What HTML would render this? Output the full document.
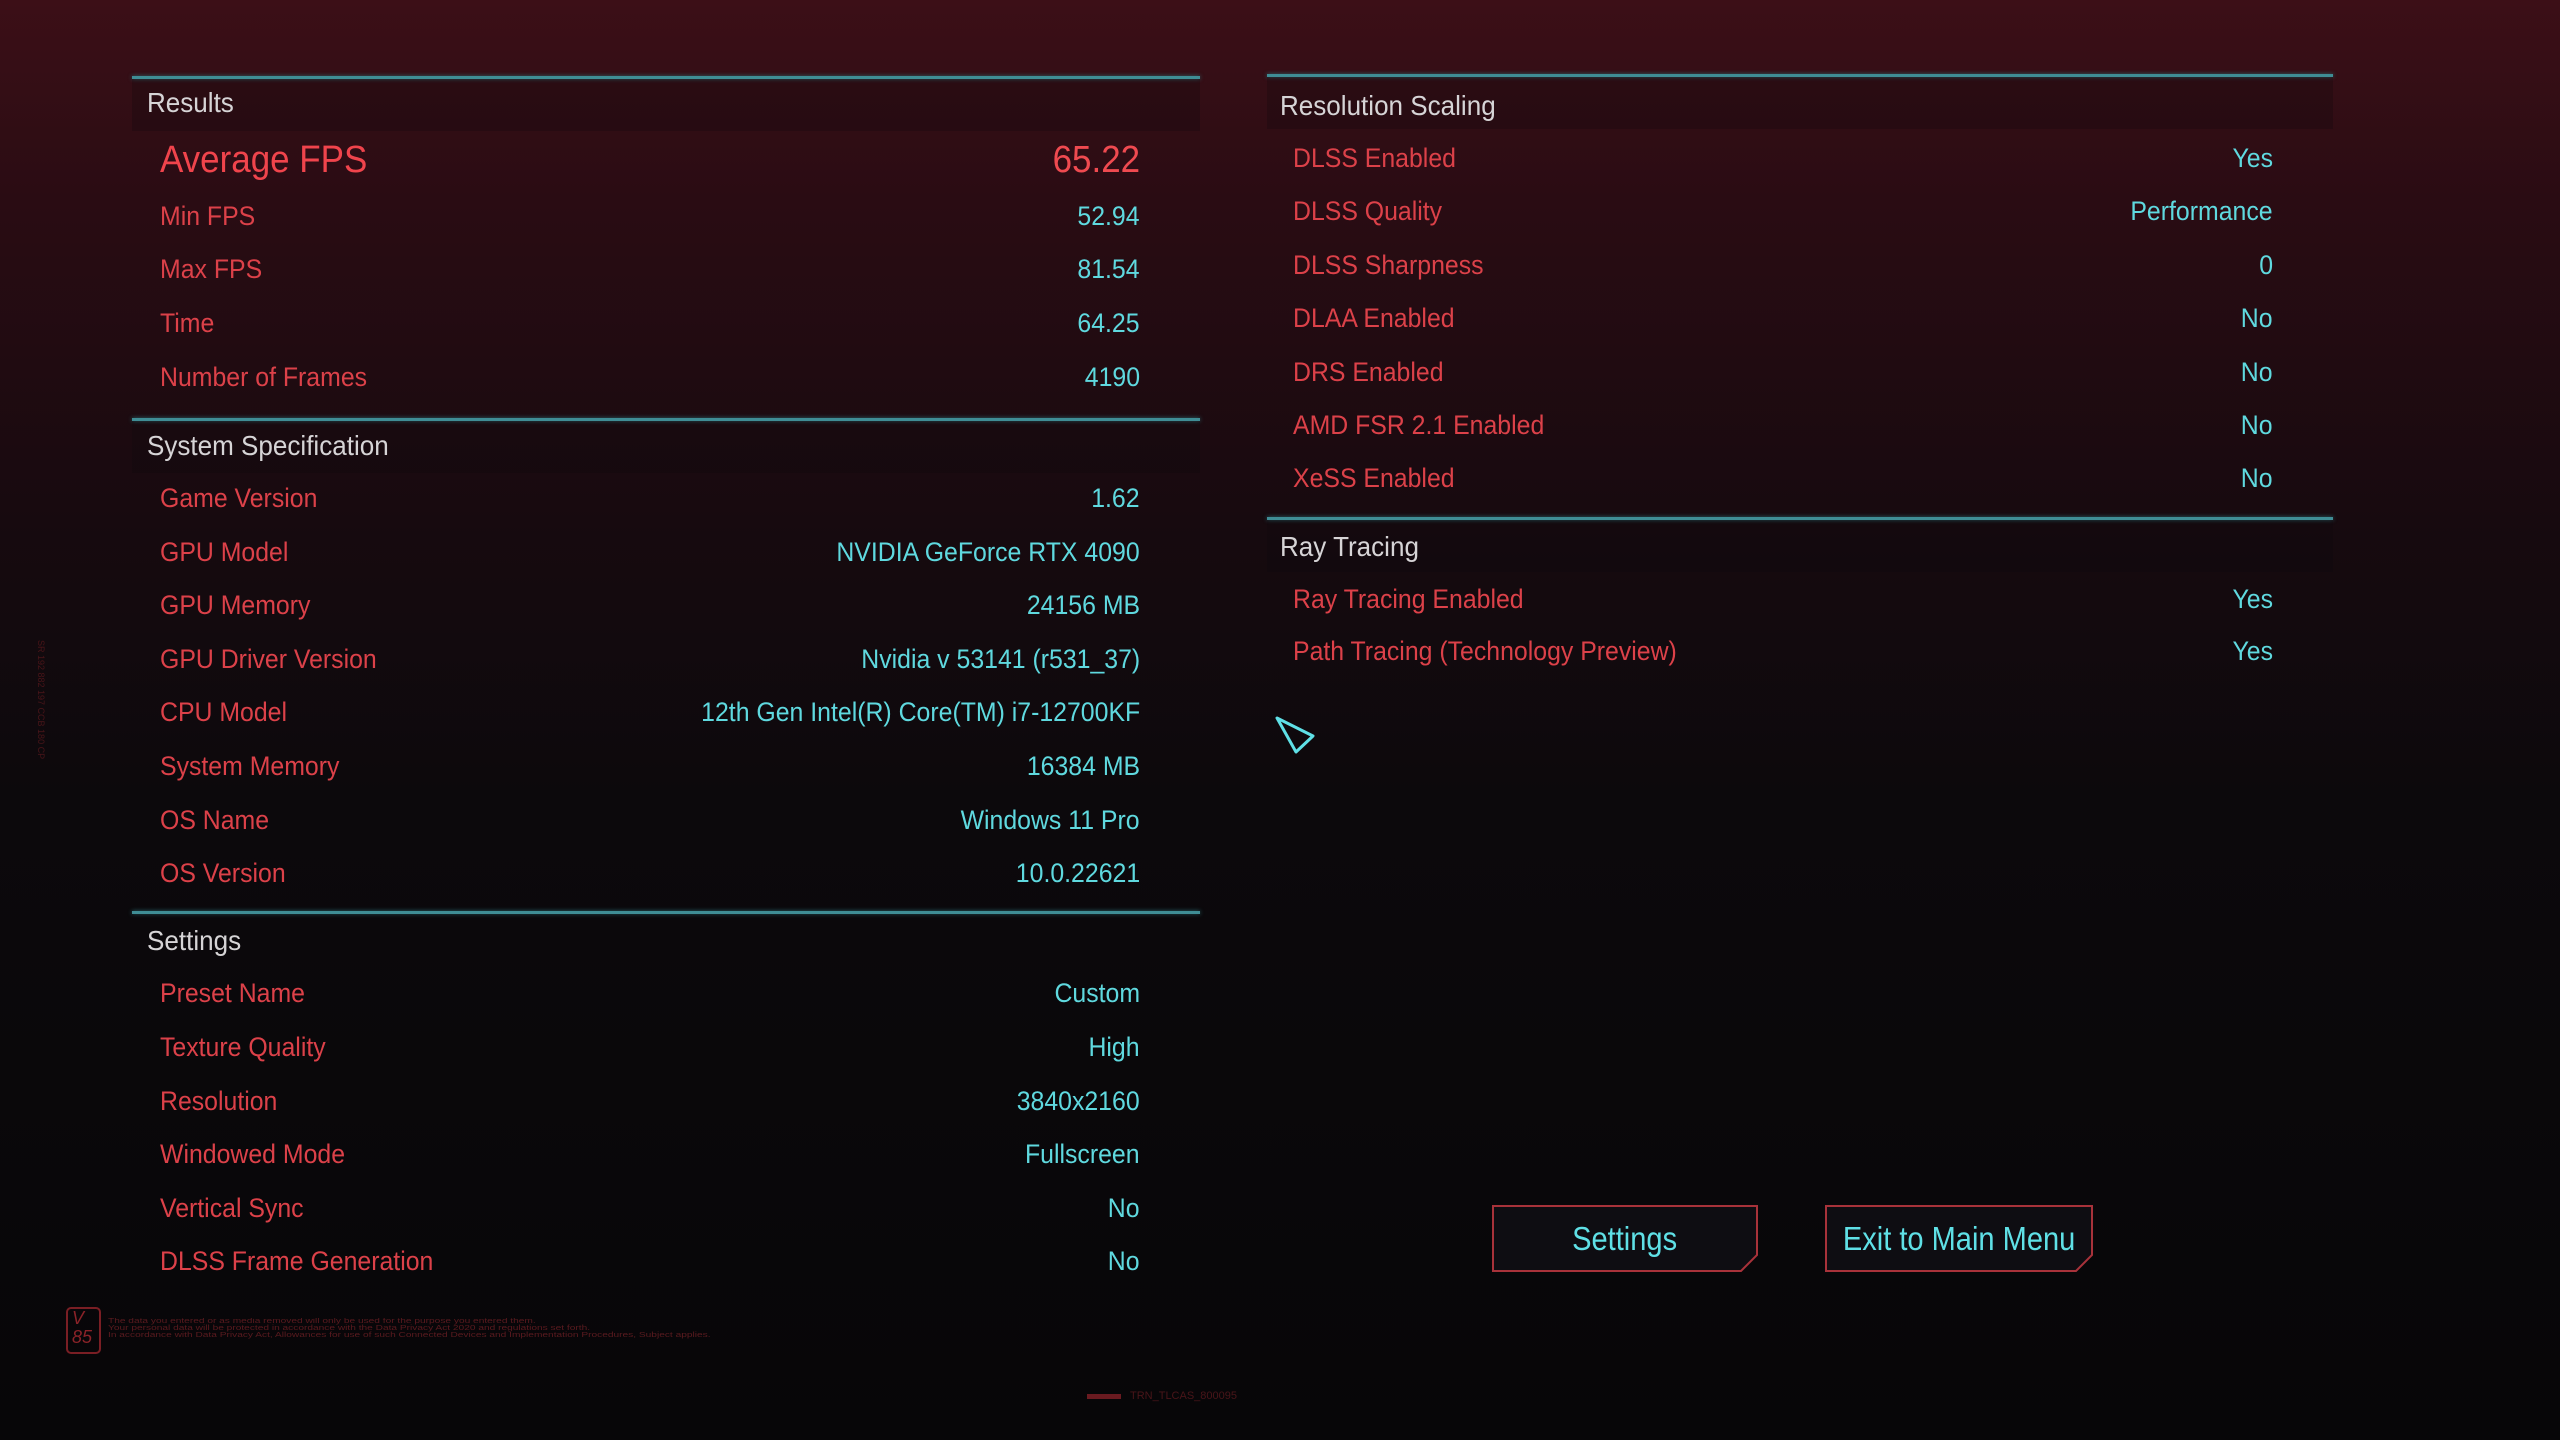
<!DOCTYPE html>
<html><head><meta charset="utf-8"><style>
*{margin:0;padding:0;box-sizing:border-box}
body{width:2560px;height:1440px;overflow:hidden;position:relative;font-family:"Liberation Sans Narrow","Liberation Sans",sans-serif;
background:linear-gradient(180deg,#3c0f17 0px,#2a0c13 200px,#170a0f 520px,#0c090c 800px,#070608 1440px);}
.line{position:absolute;height:3px;background:#3f8d95;box-shadow:0 0 4px #2c6b72}
.band{position:absolute;height:52px;background:rgba(10,8,12,0.25)}
.h{position:absolute;color:#d6d4d6;font-size:28px;line-height:36px;height:36px;transform:scaleX(0.93);transform-origin:left}
.r{position:absolute;height:36px;line-height:36px;font-size:27px}
.r .l{position:absolute;left:0;color:#dc4149;white-space:nowrap;transform:scaleX(0.92);transform-origin:left}
.r .v{position:absolute;right:0;color:#5fd9df;white-space:nowrap;transform:scaleX(0.92);transform-origin:right}
.L{left:160px;width:980px}
.R{left:1293px;width:980px}
.btn{position:absolute;top:1205px;height:67px;color:#5fe0e6;font-size:33px;line-height:67px;text-align:center;white-space:nowrap}
.btn svg{position:absolute;left:0;top:0}
.btn span{position:relative;display:inline-block;transform:scaleX(0.88)}
</style></head><body>
<!-- left panel -->
<div class="line" style="left:132px;top:76px;width:1068px"></div>
<div class="band" style="left:132px;top:79px;width:1068px"></div>
<div class="h" style="left:147px;top:85px">Results</div>
<div class="r L" style="top:140px;height:40px;line-height:40px;font-size:38px"><span class="l" style="color:#f0444c">Average FPS</span><span class="v" style="color:#ef4a50">65.22</span></div>
<div class="r L" style="top:198px"><span class="l">Min FPS</span><span class="v">52.94</span></div>
<div class="r L" style="top:251px"><span class="l">Max FPS</span><span class="v">81.54</span></div>
<div class="r L" style="top:305px"><span class="l">Time</span><span class="v">64.25</span></div>
<div class="r L" style="top:359px"><span class="l">Number of Frames</span><span class="v">4190</span></div>

<div class="line" style="left:132px;top:418px;width:1068px"></div>
<div class="band" style="left:132px;top:421px;width:1068px"></div>
<div class="h" style="left:147px;top:428px">System Specification</div>
<div class="r L" style="top:480px"><span class="l">Game Version</span><span class="v">1.62</span></div>
<div class="r L" style="top:534px"><span class="l">GPU Model</span><span class="v">NVIDIA GeForce RTX 4090</span></div>
<div class="r L" style="top:587px"><span class="l">GPU Memory</span><span class="v">24156 MB</span></div>
<div class="r L" style="top:641px"><span class="l">GPU Driver Version</span><span class="v">Nvidia v 53141 (r531_37)</span></div>
<div class="r L" style="top:694px"><span class="l">CPU Model</span><span class="v">12th Gen Intel(R) Core(TM) i7-12700KF</span></div>
<div class="r L" style="top:748px"><span class="l">System Memory</span><span class="v">16384 MB</span></div>
<div class="r L" style="top:802px"><span class="l">OS Name</span><span class="v">Windows 11 Pro</span></div>
<div class="r L" style="top:855px"><span class="l">OS Version</span><span class="v">10.0.22621</span></div>

<div class="line" style="left:132px;top:911px;width:1068px"></div>
<div class="band" style="left:132px;top:914px;width:1068px"></div>
<div class="h" style="left:147px;top:923px">Settings</div>
<div class="r L" style="top:975px"><span class="l">Preset Name</span><span class="v">Custom</span></div>
<div class="r L" style="top:1029px"><span class="l">Texture Quality</span><span class="v">High</span></div>
<div class="r L" style="top:1083px"><span class="l">Resolution</span><span class="v">3840x2160</span></div>
<div class="r L" style="top:1136px"><span class="l">Windowed Mode</span><span class="v">Fullscreen</span></div>
<div class="r L" style="top:1190px"><span class="l">Vertical Sync</span><span class="v">No</span></div>
<div class="r L" style="top:1243px"><span class="l">DLSS Frame Generation</span><span class="v">No</span></div>

<!-- right panel -->
<div class="line" style="left:1267px;top:74px;width:1066px"></div>
<div class="band" style="left:1267px;top:77px;width:1066px"></div>
<div class="h" style="left:1280px;top:88px">Resolution Scaling</div>
<div class="r R" style="top:140px"><span class="l">DLSS Enabled</span><span class="v">Yes</span></div>
<div class="r R" style="top:193px"><span class="l">DLSS Quality</span><span class="v">Performance</span></div>
<div class="r R" style="top:247px"><span class="l">DLSS Sharpness</span><span class="v">0</span></div>
<div class="r R" style="top:300px"><span class="l">DLAA Enabled</span><span class="v">No</span></div>
<div class="r R" style="top:354px"><span class="l">DRS Enabled</span><span class="v">No</span></div>
<div class="r R" style="top:407px"><span class="l">AMD FSR 2.1 Enabled</span><span class="v">No</span></div>
<div class="r R" style="top:460px"><span class="l">XeSS Enabled</span><span class="v">No</span></div>

<div class="line" style="left:1267px;top:517px;width:1066px"></div>
<div class="band" style="left:1267px;top:520px;width:1066px"></div>
<div class="h" style="left:1280px;top:529px">Ray Tracing</div>
<div class="r R" style="top:581px"><span class="l">Ray Tracing Enabled</span><span class="v">Yes</span></div>
<div class="r R" style="top:633px"><span class="l">Path Tracing (Technology Preview)</span><span class="v">Yes</span></div>

<svg style="position:absolute;left:1270px;top:710px" width="60" height="50"><polygon points="7,8 43,26 26,42" fill="none" stroke="#5fe0e6" stroke-width="3" stroke-linejoin="round"/></svg>

<div class="btn" style="left:1492px;width:266px"><svg width="266" height="67"><polygon points="1,1 265,1 265,50 249,66 1,66" fill="#0e0d12" stroke="#a8323a" stroke-width="2"/></svg><span>Settings</span></div>
<div class="btn" style="left:1825px;width:268px"><svg width="268" height="67"><polygon points="1,1 267,1 267,50 251,66 1,66" fill="#0e0d12" stroke="#a8323a" stroke-width="2"/></svg><span>Exit to Main Menu</span></div>

<!-- footer -->
<div style="position:absolute;left:66px;top:1307px;width:35px;height:47px;border:2px solid #7a1e24;border-radius:5px;color:#8a2228;font-size:18px;line-height:19px;font-style:italic;padding-left:4px">V<br>85</div>
<div style="position:absolute;left:108px;top:1318px;color:#5a1a1f;font-size:7px;line-height:7px;white-space:nowrap;transform:scaleX(1.45);transform-origin:left">The data you entered or as media removed will only be used for the purpose you entered them.<br>Your personal data will be protected in accordance with the Data Privacy Act 2020 and regulations set forth.<br>In accordance with Data Privacy Act, Allowances for use of such Connected Devices and Implementation Procedures, Subject applies.</div>
<div style="position:absolute;left:1087px;top:1394px;width:34px;height:5px;background:#6a1a20"></div>
<div style="position:absolute;left:1130px;top:1390px;color:#4a1519;font-size:11px">TRN_TLCAS_800095</div>
<div style="position:absolute;left:36px;top:640px;color:#4a1519;font-size:9px;writing-mode:vertical-rl">SR 192 882 197 CCB 180 CP</div>
</body></html>
